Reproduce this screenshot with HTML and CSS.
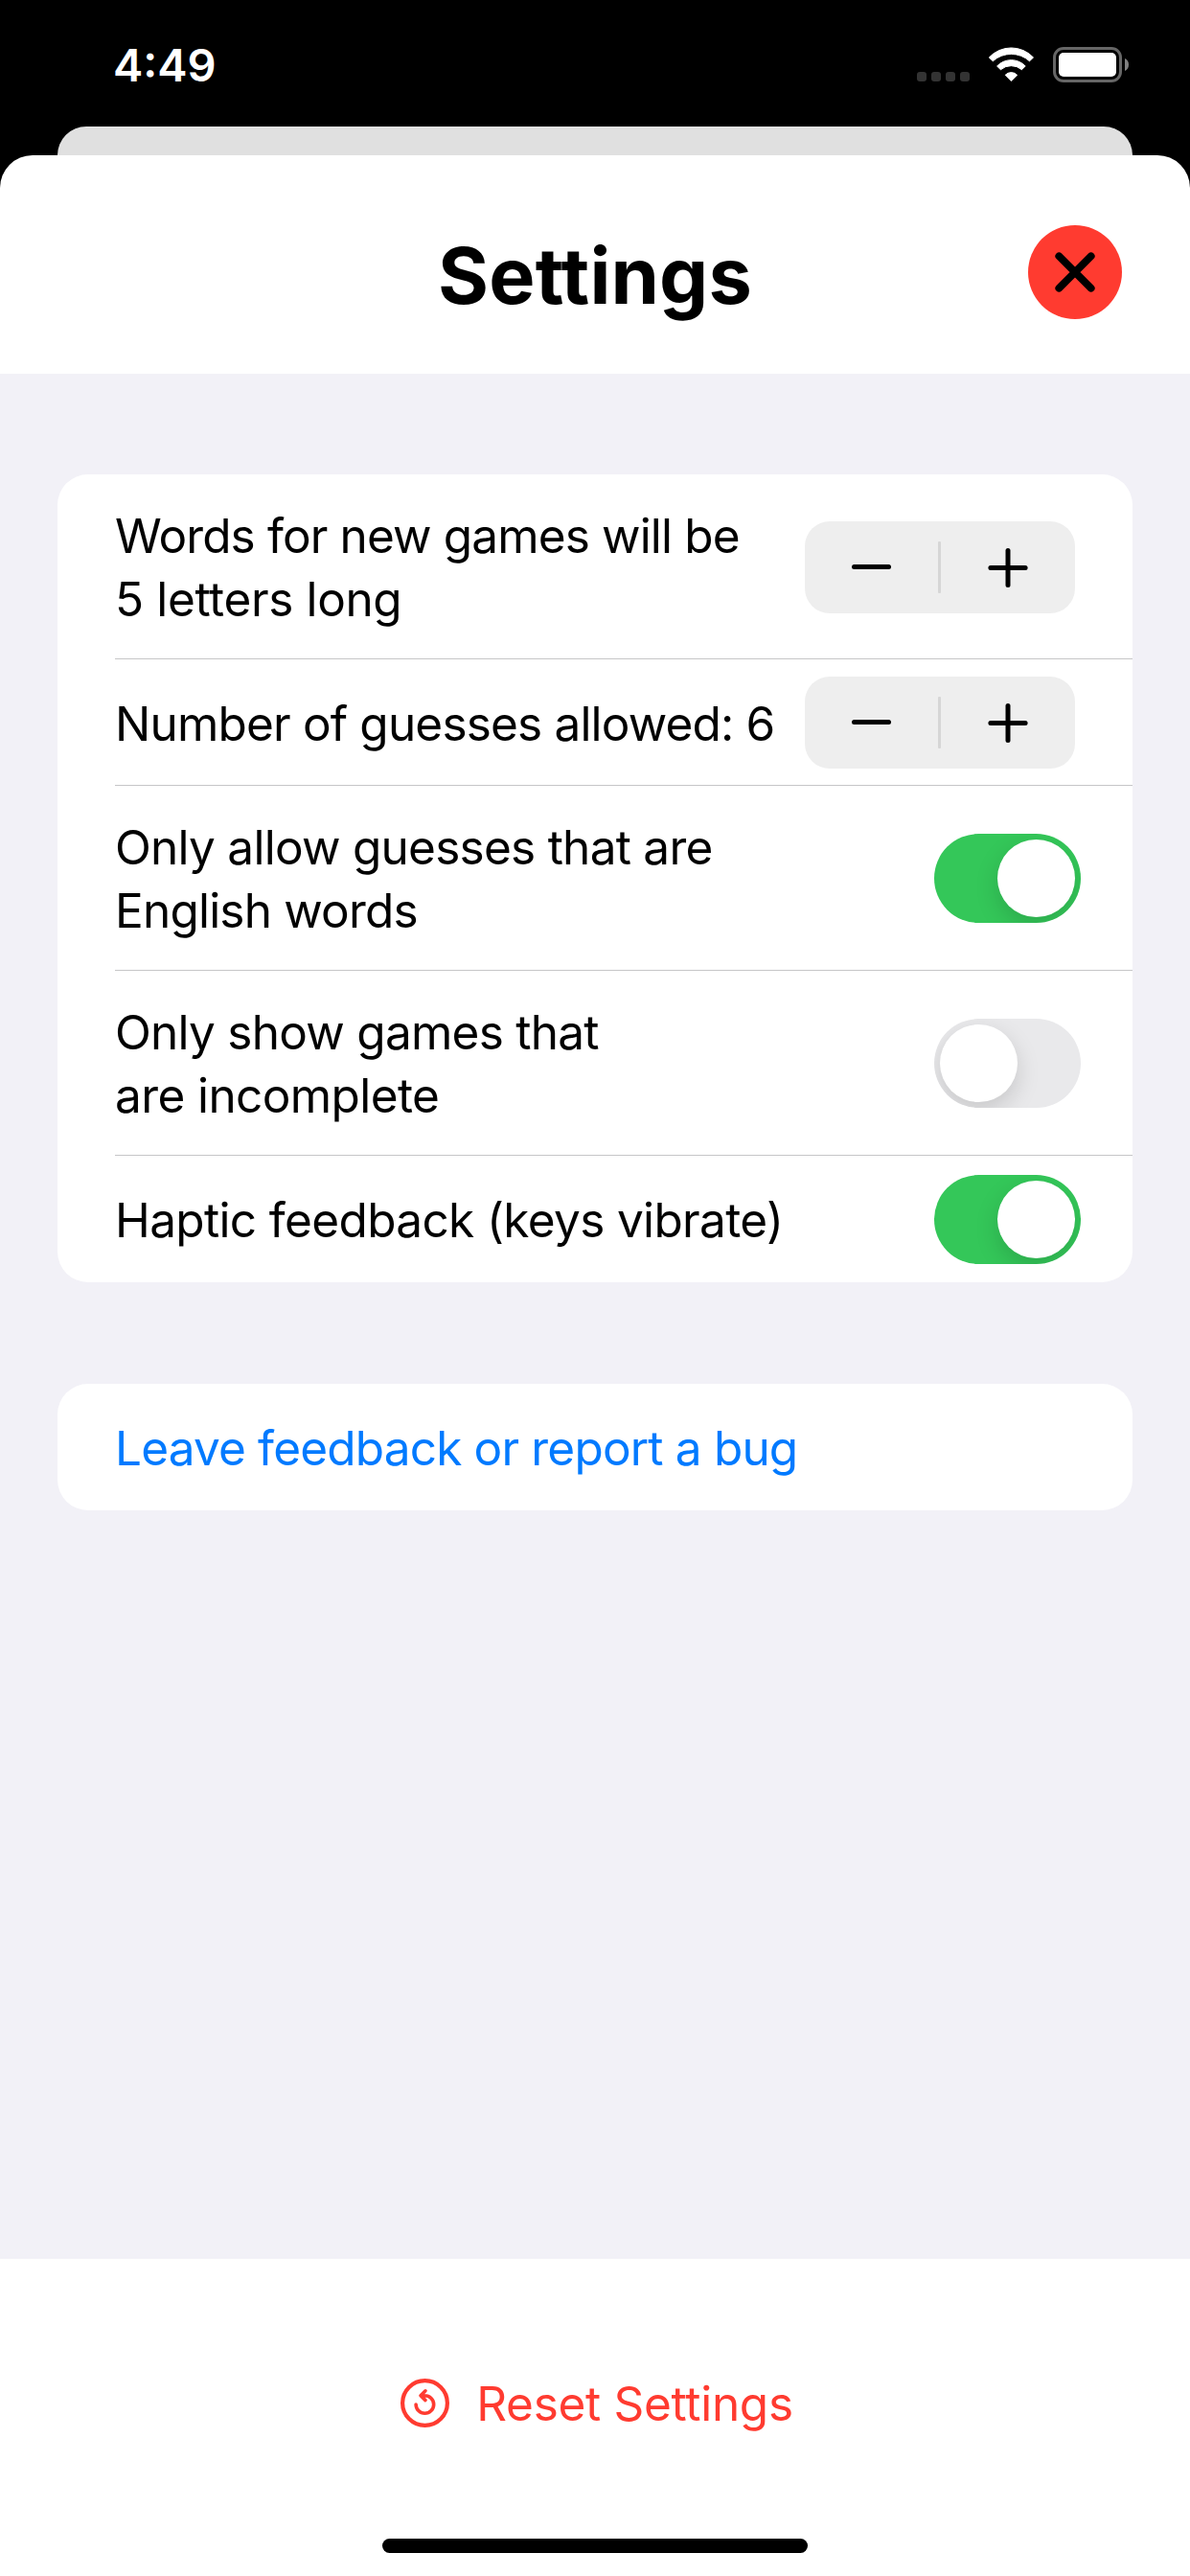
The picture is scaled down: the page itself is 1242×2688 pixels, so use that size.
FILE: index.html
```html
<!DOCTYPE html>
<html lang="en">
<head>
<meta charset="utf-8">
<title>Settings</title>
<link rel="stylesheet" href="styles.css">
</head>
<body>
<div class="screen">
  <header class="status">
    <span class="time">4:49</span>
    <svg class="status-icons" viewBox="0 0 221 37">
      <g fill="#333">
        <rect x="0" y="26" width="10" height="10" rx="3"/>
        <rect x="15" y="26" width="10" height="10" rx="3"/>
        <rect x="30" y="26" width="10" height="10" rx="3"/>
        <rect x="45" y="26" width="10" height="10" rx="3"/>
      </g>
      <g fill="#fff" stroke="#fff" stroke-width="1" stroke-linejoin="round">
        <path d="M75.3 11 A31.6 31.6 0 0 1 121.5 11 L117.5 14.8 A28.4 28.4 0 0 0 79.3 14.8 Z"/>
        <path d="M83.6 20 A20.4 20.4 0 0 1 113.2 20 L109.4 23.7 A17 17 0 0 0 87.4 23.7 Z"/>
        <path d="M92.2 29.3 A8.5 8.5 0 0 1 104.6 29.3 L98.4 35.5 Z"/>
      </g>
      <rect x="143.5" y="1.5" width="69" height="34" rx="9.5" fill="none" stroke="#666" stroke-width="3"/>
      <rect x="148" y="6" width="60" height="25" rx="5" fill="#fff"/>
      <path d="M217 12 C219.5 13 221 15.5 221 18.5 C221 21.5 219.5 24 217 25 Z" fill="#808080"/>
    </svg>
  </header>

  <div class="backsheet"></div>

  <main class="sheet">
    <div class="titlebar">
      <h1 class="title">Settings</h1>
      <button class="close" aria-label="Close">
        <svg viewBox="0 0 98 98" width="98" height="98">
          <path d="M32.3 32.3 L65.7 65.7 M65.7 32.3 L32.3 65.7" stroke="#000" stroke-width="7.8" stroke-linecap="round"/>
        </svg>
      </button>
    </div>

    <div class="content">
      <section class="card">
        <div class="row row-tall row-first">
          <div class="label"><span class="ls-words">Words for new games will be</span><br><span class="ls-letters">5 letters long</span></div>
          <div class="stepper">
            <svg viewBox="0 0 282 96" width="282" height="96">
              <rect x="49" y="45" width="41" height="5" rx="2.5"/>
              <rect x="139" y="21" width="3" height="54" rx="1" fill="#d6d6d6"/>
              <rect x="191.4" y="46" width="41.2" height="5" rx="2.5"/>
              <rect x="209.5" y="28" width="5" height="41" rx="2.5"/>
            </svg>
          </div>
        </div>
        <div class="row row-short">
          <div class="label label-drop"><span class="ls-number">Number of guesses allowed: 6</span></div>
          <div class="stepper">
            <svg viewBox="0 0 282 96" width="282" height="96">
              <rect x="49" y="45" width="41" height="5" rx="2.5"/>
              <rect x="139" y="21" width="3" height="54" rx="1" fill="#d6d6d6"/>
              <rect x="191.4" y="46" width="41.2" height="5" rx="2.5"/>
              <rect x="209.5" y="28" width="5" height="41" rx="2.5"/>
            </svg>
          </div>
        </div>
        <div class="row row-tall">
          <div class="label label-nudge"><span class="ls-only">Only allow guesses that are</span><br><span class="ls-english">English words</span></div>
          <div class="toggle toggle-on"><div class="knob"></div></div>
        </div>
        <div class="row row-tall">
          <div class="label label-nudge"><span class="ls-only">Only show games that</span><br><span class="ls-incomplete">are incomplete</span></div>
          <div class="toggle"><div class="knob"></div></div>
        </div>
        <div class="row row-short row-last">
          <div class="label label-nudge"><span class="ls-haptic">Haptic feedback (keys vibrate)</span></div>
          <div class="toggle toggle-on"><div class="knob"></div></div>
        </div>
      </section>

      <section class="card card-link">
        <a class="link">Leave feedback or report a bug</a>
      </section>
    </div>

    <footer class="footer">
      <div class="reset">
        <svg viewBox="0 0 51 51" width="51" height="51" fill="none" stroke="#ff3b30" stroke-linecap="round" stroke-linejoin="round">
          <circle cx="25.5" cy="25.5" r="23.4" stroke-width="4.2"/>
          <path d="M16.1 27 A9.3 9.3 0 1 0 25.4 17.7 L21.5 17.6 M26 12.8 L21 17.7 L26 22.6" stroke-width="3.6"/>
        </svg>
        <span class="reset-text">Reset Settings</span>
      </div>
      <div class="home"></div>
    </footer>
  </main>
</div>
</body>
</html>
```
FILE: styles.css
```css
* { box-sizing: border-box; }

body {
  margin: 0;
  background: #000;
  font-family: "Inter", "Liberation Sans", sans-serif;
  color: #000;
}

.screen {
  display: flex;
  flex-direction: column;
  width: 1242px;
  height: 2688px;
  background: #000;
  overflow: hidden;
}

.status {
  display: flex;
  justify-content: space-between;
  align-items: flex-start;
  height: 132px;
  padding: 49px 64px 0 118px;
  color: #fff;
}

.time {
  font-size: 47px;
  font-weight: 600;
  line-height: 38px;
}

.status-icons {
  width: 221px;
  height: 37px;
}

.backsheet {
  height: 30px;
  margin: 0 60px;
  background: #e0e0e0;
  border-radius: 30px 30px 0 0;
}

.sheet {
  display: flex;
  flex: 1;
  flex-direction: column;
  background: #fff;
  border-radius: 34px 34px 0 0;
  overflow: hidden;
}

.titlebar {
  display: grid;
  grid-template-columns: 1fr auto 1fr;
  height: 228px;
  padding: 73px 71px 0;
}

.title {
  grid-column: 2;
  height: 98px;
  margin: 0;
  padding-top: 4px;
  font-size: 81px;
  font-weight: 700;
  line-height: 98px;
  letter-spacing: 0.15px;
}

.close {
  justify-self: end;
  width: 98px;
  height: 98px;
  padding: 0;
  border: 0;
  border-radius: 50%;
  background: #ff3b30;
}

.close svg { display: block; }

.content {
  display: flex;
  flex: 1;
  flex-direction: column;
  gap: 106px;
  padding: 105px 60px 0;
  background: #f2f1f7;
}

.card {
  padding-left: 60px;
  background: #fff;
  border-radius: 32px;
  font-size: 49.5px;
  line-height: 66px;
}

.row {
  display: flex;
  align-items: center;
  justify-content: space-between;
  padding: 1px 60px 0 0;
  border-bottom: 1px solid #c6c6c8;
}

.row-tall { height: 193px; }
.row-short { height: 132px; }
.row-first { padding-top: 2px; }
.row-last { border-bottom: 0; }

.label { white-space: nowrap; }
.label-nudge { padding-top: 1px; }
.label-drop { padding-top: 2px; }

.ls-words { letter-spacing: -0.86px; }
.ls-letters { letter-spacing: -0.36px; }
.ls-number { letter-spacing: -0.82px; }
.ls-only { letter-spacing: -0.74px; }
.ls-english { letter-spacing: -0.8px; }
.ls-incomplete { letter-spacing: -0.6px; }
.ls-haptic { letter-spacing: -0.64px; }

.stepper {
  width: 282px;
  height: 96px;
  flex: none;
  border-radius: 26px;
  background: #eee;
}

.stepper svg { display: block; }

.toggle {
  display: flex;
  flex: none;
  width: 153px;
  height: 93px;
  margin-right: -6px;
  padding: 6px;
  border-radius: 46.5px;
  background: #e9e9eb;
  overflow: hidden;
}

.toggle-on {
  justify-content: flex-end;
  background: #34c759;
}

.knob {
  width: 81px;
  height: 81px;
  border-radius: 50%;
  background: #fff;
  box-shadow: 0 9px 24px rgba(0, 0, 0, 0.15);
}

.card-link {
  display: flex;
  align-items: center;
  height: 132px;
}

.link {
  padding-top: 2px;
  color: #007aff;
  letter-spacing: -0.82px;
}

.footer {
  display: flex;
  flex-direction: column;
  align-items: center;
  justify-content: space-between;
  height: 331px;
  padding: 117px 0 24px;
  background: #fff;
}

.reset {
  display: flex;
  align-items: center;
  gap: 28px;
  height: 66px;
  padding-left: 4px;
  color: #ff3b30;
}

.reset-text {
  padding-top: 2px;
  font-size: 49.5px;
  line-height: 66px;
  letter-spacing: -0.29px;
}

.home {
  width: 444px;
  height: 15px;
  border-radius: 8px;
  background: #000;
}
```
